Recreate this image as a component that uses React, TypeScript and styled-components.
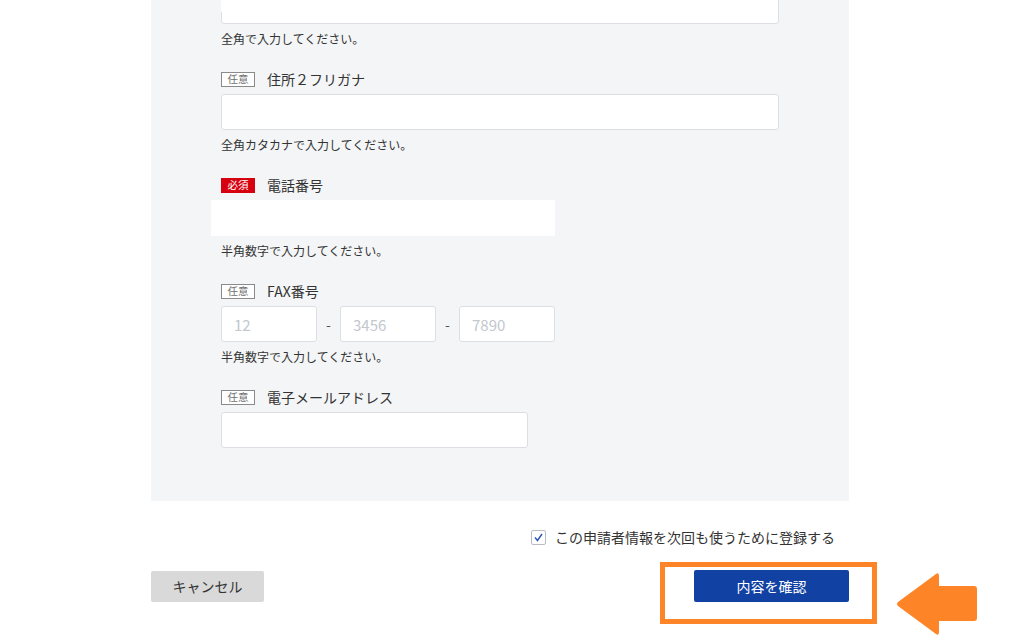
import styled, { createGlobalStyle } from 'styled-components'

const GlobalStyle = createGlobalStyle`
  html {
    overflow: hidden;
  }
  body {
    margin: 0;
    padding: 0;
    background: #ffffff;
    font-family: "Noto Sans CJK JP", "Noto Sans", sans-serif;
    color: #333333;
  }
`

const Page = styled.div`
  width: 698px;
  margin-left: 151px;
  padding-bottom: 40px;
  position: relative;
`

const Panel = styled.div`
  background: #f4f5f7;
  padding: 0 70px 53px 70px;
  position: relative;
`

const Field = styled.div`
  margin-bottom: 25px;
  &:last-child {
    margin-bottom: 0;
  }
`

const LabelRow = styled.div`
  display: flex;
  align-items: center;
  gap: 12px;
  height: 15px;
  margin-bottom: 7px;
`

const Badge = styled.span<{ $required?: boolean }>`
  display: inline-flex;
  align-items: center;
  justify-content: center;
  box-sizing: border-box;
  width: 34px;
  height: 15px;
  font-size: 10.5px;
  line-height: 1;
  color: ${({ $required }) => ($required ? '#ffffff' : '#707070')};
  background: ${({ $required }) => ($required ? '#d7000f' : '#ffffff')};
  border: 1px solid ${({ $required }) => ($required ? '#d7000f' : '#8a8a8a')};
`

const LabelText = styled.span`
  font-size: 14px;
  color: #333333;
  line-height: 1;
  margin-top: -2px;
`

const Input = styled.div<{ $width?: number; $offset?: number }>`
  box-sizing: border-box;
  width: ${({ $width }) => $width ?? 558}px;
  height: 36px;
  margin-top: ${({ $offset }) => $offset ?? 0}px;
  background: #ffffff;
  border: 1px solid #dcdee3;
  border-radius: 3px;
  padding-left: 12px;
  display: flex;
  align-items: center;
  font-size: 15px;
  color: #c3c7ce;
`

const InputRow = styled.div`
  display: flex;
  align-items: center;
  gap: 8px;
  position: relative;
`

const Dash = styled.span`
  width: 7px;
  text-align: center;
  font-size: 14px;
  color: #555555;
`

const Help = styled.div`
  margin-top: 7px;
  font-size: 12px;
  line-height: 16px;
  color: #333333;
`

const Redaction = styled.div<{ $left: number; $top: number; $w: number; $h: number }>`
  position: absolute;
  left: ${({ $left }) => $left}px;
  top: ${({ $top }) => $top}px;
  width: ${({ $w }) => $w}px;
  height: ${({ $h }) => $h}px;
  background: #ffffff;
`

const RegisterRow = styled.label`
  display: flex;
  justify-content: flex-end;
  align-items: center;
  gap: 9px;
  margin-top: 28px;
  padding-right: 14px;
  font-size: 14px;
  color: #333333;
  height: 16px;
`

const CheckBox = styled.span`
  box-sizing: border-box;
  width: 15px;
  height: 15px;
  border: 1px solid #b9bcc4;
  border-radius: 2px;
  background: #ffffff;
  display: inline-flex;
  align-items: center;
  justify-content: center;
`

const ButtonRow = styled.div`
  display: flex;
  justify-content: space-between;
  align-items: center;
  margin-top: 25px;
`

const CancelButton = styled.button`
  width: 113px;
  height: 31px;
  border: none;
  border-radius: 2px;
  background: #d9d9d9;
  color: #333333;
  font-family: inherit;
  font-size: 14px;
  padding: 0;
`

const ConfirmWrap = styled.div`
  position: relative;
`

const ConfirmButton = styled.button`
  width: 155px;
  height: 32px;
  border: none;
  border-radius: 2px;
  background: #1141a3;
  color: #ffffff;
  font-family: inherit;
  font-size: 14px;
  padding: 0;
  display: block;
`

const Highlight = styled.div`
  position: absolute;
  left: -34px;
  top: -8px;
  width: 217px;
  height: 62px;
  box-sizing: border-box;
  border: 5px solid #fd8427;
  pointer-events: none;
`

const Arrow = styled.svg`
  position: absolute;
  left: 202px;
  top: 2px;
`

export default function App() {
  return (
    <>
      <GlobalStyle />
      <Page>
        <Panel>
          <Redaction $left={70} $top={0} $w={215} $h={24} />

          <Field>
            <Input $offset={-12} />
            <Help>全角で入力してください。</Help>
          </Field>

          <Field>
            <LabelRow>
              <Badge>任意</Badge>
              <LabelText>住所２フリガナ</LabelText>
            </LabelRow>
            <Input />
            <Help>全角カタカナで入力してください。</Help>
          </Field>

          <Field>
            <LabelRow>
              <Badge $required>必須</Badge>
              <LabelText>電話番号</LabelText>
            </LabelRow>
            <InputRow>
              <Input $width={96} />
              <Dash>-</Dash>
              <Input $width={96} />
              <Dash>-</Dash>
              <Input $width={96} />
              <Redaction $left={-10} $top={0} $w={344} $h={36} />
            </InputRow>
            <Help>半角数字で入力してください。</Help>
          </Field>

          <Field>
            <LabelRow>
              <Badge>任意</Badge>
              <LabelText>FAX番号</LabelText>
            </LabelRow>
            <InputRow>
              <Input $width={96}>12</Input>
              <Dash>-</Dash>
              <Input $width={96}>3456</Input>
              <Dash>-</Dash>
              <Input $width={96}>7890</Input>
            </InputRow>
            <Help>半角数字で入力してください。</Help>
          </Field>

          <Field>
            <LabelRow>
              <Badge>任意</Badge>
              <LabelText>電子メールアドレス</LabelText>
            </LabelRow>
            <Input $width={307} />
          </Field>
        </Panel>

        <RegisterRow>
          <CheckBox>
            <svg width="11" height="11" viewBox="0 0 11 11">
              <path d="M2 5.5 L4.5 8.5 L9 2" fill="none" stroke="#2a55b8" strokeWidth="1.4" />
            </svg>
          </CheckBox>
          この申請者情報を次回も使うために登録する
        </RegisterRow>

        <ButtonRow>
          <CancelButton>キャンセル</CancelButton>
          <ConfirmWrap>
            <ConfirmButton>内容を確認</ConfirmButton>
            <Highlight />
            <Arrow width="82" height="64" viewBox="0 0 82 64">
              <path
                d="M43 4 Q43 0 40 2 L2 30 Q0 32 2 34 L40 62 Q43 64 43 60 L43 49 L78 49 Q81 49 81 46 L81 17 Q81 14 78 14 L43 14 Z"
                fill="#fd8427"
              />
            </Arrow>
          </ConfirmWrap>
        </ButtonRow>
      </Page>
    </>
  )
}
